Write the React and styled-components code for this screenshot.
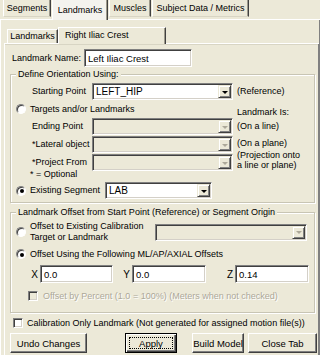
import React from 'react';
import styled, { createGlobalStyle } from 'styled-components';

const Global = createGlobalStyle`
  html, body { margin: 0; padding: 0; background: #ECE9D8; }
  body { font-family: "Liberation Sans", Arial, sans-serif; }
  * { box-sizing: border-box; }
`;

const Window = styled.div`
  width: 320px;
  height: 355px;
  overflow: hidden;
  background: #ECE9D8;
  display: flex;
  flex-direction: column;
  font-family: "Liberation Sans", Arial, sans-serif;
  font-size: 9px;
  line-height: 11px;
  color: #000;
`;

const TopStrip = styled.div`
  display: flex;
  align-items: flex-start;
  height: 20px;
  padding-left: 3px;
  border-bottom: 1px solid #fff;
`;

const TopTab = styled.div`
  width: ${p => p.$w}px;
  height: ${p => (p.$active ? 20 : 17)}px;
  margin-right: 1px;
  display: flex;
  align-items: center;
  justify-content: center;
  padding-top: ${p => (p.$active ? 0 : 1)}px;
  border-left: 1px solid #fff;
  border-right: 1px solid #404040;
  border-bottom: ${p => (p.$active ? 'none' : '1px solid #D8D5C4')};
  box-shadow: inset -1px 0 #9d9a8c;
  background: ${p => (p.$active ? '#F4F3EE' : '#ECE9D8')};
  position: relative;
  z-index: ${p => (p.$active ? 1 : 0)};
  white-space: nowrap;
`;

const OuterPanel = styled.div`
  flex: 1;
  display: flex;
  flex-direction: column;
  border-left: 1px solid #fff;
  border-right: 1px solid #808080;
  padding: 7px 0 0 3px;
`;

const InnerStrip = styled.div`
  display: flex;
  align-items: flex-end;
  height: 17px;
  padding-left: 3px;
  border-bottom: 1px solid #fff;
  box-shadow: 0 1px 0 #D8D5C4;
`;

const InnerTab = styled.div`
  width: ${p => p.$w}px;
  height: ${p => (p.$active ? 17 : 14)}px;
  margin-bottom: ${p => (p.$active ? -1 : 0)}px;
  display: flex;
  align-items: center;
  justify-content: ${p => (p.$left ? 'flex-start' : 'center')};
  padding-left: ${p => (p.$left ? 6 : 0)}px;
  padding-bottom: ${p => (p.$active ? 1 : 0)}px;
  border-top: 1px solid #fff;
  border-left: 1px solid #fff;
  border-right: 1px solid #404040;
  box-shadow: inset -1px 0 #9d9a8c;
  background: #ECE9D8;
  position: relative;
  z-index: ${p => (p.$active ? 1 : 0)};
  white-space: nowrap;
`;

const InnerPanel = styled.div`
  flex: 1;
  display: flex;
  flex-direction: column;
  border-left: 1px solid #fff;
  border-right: 1px solid #808080;
`;

const Row = styled.div`
  display: flex;
  align-items: center;
  height: ${p => p.$h}px;
  margin-top: ${p => p.$mt ?? 0}px;
  padding-left: ${p => p.$pl ?? 0}px;
  flex-shrink: 0;
`;

const Label = styled.span`
  display: inline-block;
  width: ${p => p.$w}px;
  padding-left: ${p => p.$pl ?? 0}px;
  white-space: nowrap;
  flex-shrink: 0;
`;

const AxisLabel = styled.span`
  width: ${p => p.$w}px;
  text-align: right;
  padding-right: 2px;
  flex-shrink: 0;
  font-size: 10px;
`;

const Field = styled.div`
  width: ${p => p.$w}px;
  height: 18px;
  flex-shrink: 0;
  display: flex;
  align-items: center;
  background: #fff;
  border: 1px solid;
  border-color: #808080 #fff #fff #808080;
  box-shadow: inset 1px 1px #404040, inset -1px -1px #D4D0C8;
  padding-left: 3px;
  white-space: nowrap;
  overflow: hidden;
  font-size: 9.5px;
`;

const SelectBox = styled.div`
  width: ${p => p.$w}px;
  height: 17px;
  flex-shrink: 0;
  display: flex;
  align-items: stretch;
  background: ${p => (p.$disabled ? '#ECE9D8' : '#fff')};
  border: 1px solid;
  border-color: #808080 #fff #fff #808080;
  box-shadow: inset 1px 1px #404040, inset -1px -1px #D4D0C8;
  padding: 1px;
`;

const SelectValue = styled.span`
  flex: 1;
  display: flex;
  align-items: center;
  padding-left: 2px;
  font-size: 10px;
  white-space: nowrap;
  overflow: hidden;
`;

const ArrowButton = styled.span`
  width: 13px;
  flex-shrink: 0;
  display: flex;
  align-items: center;
  justify-content: center;
  background: #ECE9D8;
  border: 1px solid;
  border-color: #ECE9D8 #404040 #404040 #ECE9D8;
  box-shadow: inset 1px 1px #fff, inset -1px -1px #808080;
`;

const Triangle = styled.span`
  width: 0;
  height: 0;
  border-left: 3px solid transparent;
  border-right: 3px solid transparent;
  border-top: 3px solid ${p => (p.$disabled ? '#ACA899' : '#000')};
  margin-top: 1px;
`;

const Note = styled.span`
  margin-left: ${p => p.$ml ?? 4}px;
  align-self: ${p => p.$align ?? 'center'};
  margin-top: ${p => p.$mt ?? 0}px;
  line-height: ${p => p.$lh ?? 11}px;
  white-space: nowrap;
`;

const Group = styled.fieldset`
  margin: ${p => p.$mt}px 3px 0 5px;
  padding: 0 0 ${p => p.$pb}px 0;
  border: 1px solid #C8C5B4;
  box-shadow: inset 1px 1px #fff, 1px 1px 0 #fff;
  min-width: 0;
  display: flex;
  flex-direction: column;
  flex-shrink: 0;
`;

const Legend = styled.legend`
  margin-left: 5px;
  padding: 0 2px;
  line-height: 11px;
  font-size: 9px;
  background: #ECE9D8;
`;

const Part = styled.div`
  width: ${p => p.$w}px;
  flex-shrink: 0;
  display: flex;
  align-items: center;
  padding-left: ${p => p.$pl ?? 0}px;
  align-self: stretch;
`;

const Radio = styled.span`
  width: 10px;
  height: 10px;
  flex-shrink: 0;
  border-radius: 50%;
  background: #fff;
  border: 1px solid;
  border-color: #808080 #fff #fff #808080;
  box-shadow: inset 1px 1px #404040;
  display: flex;
  align-items: center;
  justify-content: center;
`;

const Dot = styled.span`
  width: 4px;
  height: 4px;
  border-radius: 50%;
  background: #000;
  margin: 1px 0 0 1px;
`;

const RadioText = styled.span`
  margin-left: 4px;
  white-space: nowrap;
`;

const Check = styled.span`
  width: 10px;
  height: 10px;
  flex-shrink: 0;
  margin-left: ${p => p.$ml ?? 0}px;
  background: ${p => (p.$disabled ? '#ECE9D8' : '#fff')};
  border: 1px solid;
  border-color: #808080 #fff #fff #808080;
  box-shadow: inset 1px 1px #404040, inset -1px -1px #D4D0C8;
`;

const CheckText = styled.span`
  margin-left: ${p => p.$ml ?? 5}px;
  white-space: nowrap;
  color: ${p => (p.$disabled ? '#ACA899' : '#000')};
  text-shadow: ${p => (p.$disabled ? '1px 1px 0 #fff' : 'none')};
`;

const Button = styled.div`
  width: ${p => p.$w}px;
  height: 20px;
  margin-left: ${p => p.$ml}px;
  flex-shrink: 0;
  display: flex;
  align-items: stretch;
  justify-content: center;
  padding: ${p => (p.$default ? '3px' : '0')};
  background: #ECE9D8;
  border: 1px solid;
  border-color: ${p => (p.$default ? '#000' : '#fff #404040 #404040 #fff')};
  box-shadow: ${p =>
    p.$default
      ? 'inset 1px 1px #fff, inset -1px -1px #404040, inset -2px -2px #808080'
      : 'inset -1px -1px #808080'};
  font-size: 9.5px;
  white-space: nowrap;
`;

const ButtonText = styled.span`
  flex: 1;
  display: flex;
  align-items: center;
  justify-content: center;
  border: 1px ${p => (p.$focus ? 'dotted #000' : 'solid transparent')};
`;

function Select({ w, value, disabled }) {
  return (
    <SelectBox $w={w} $disabled={disabled}>
      <SelectValue>{value}</SelectValue>
      <ArrowButton>
        <Triangle $disabled={disabled} />
      </ArrowButton>
    </SelectBox>
  );
}

function RadioItem({ checked, children }) {
  return (
    <>
      <Radio>{checked && <Dot />}</Radio>
      <RadioText>{children}</RadioText>
    </>
  );
}

export default function App() {
  return (
    <Window>
      <Global />
      <TopStrip>
        <TopTab $w={48}>Segments</TopTab>
        <TopTab $w={56} $active>Landmarks</TopTab>
        <TopTab $w={42}>Muscles</TopTab>
        <TopTab $w={97}>Subject Data / Metrics</TopTab>
      </TopStrip>
      <OuterPanel>
        <InnerStrip>
          <InnerTab $w={51}>Landmarks</InnerTab>
          <InnerTab $w={108} $active $left>Right Iliac Crest</InnerTab>
        </InnerStrip>
        <InnerPanel>
          <Row $h={18} $mt={5}>
            <Label $w={79} $pl={7}>Landmark Name:</Label>
            <Field $w={108}>Left Iliac Crest</Field>
          </Row>

          <Group $mt={2} $pb={3}>
            <Legend>Define Orientation Using:</Legend>
            <Row $h={17} $mt={3}>
              <Label $w={81} $pl={21}>Starting Point</Label>
              <Select w={141} value="LEFT_HIP" />
              <Note>(Reference)</Note>
            </Row>
            <Row $h={18}>
              <Part $w={226} $pl={5}>
                <RadioItem>Targets and/or Landmarks</RadioItem>
              </Part>
              <Note $align="flex-end" $ml={0}>Landmark Is:</Note>
            </Row>
            <Row $h={17}>
              <Label $w={81} $pl={21}>Ending Point</Label>
              <Select w={141} disabled />
              <Note>(On a line)</Note>
            </Row>
            <Row $h={17} $mt={1}>
              <Label $w={81} $pl={21}>*Lateral object</Label>
              <Select w={141} disabled />
              <Note $mt={-2}>(On a plane)</Note>
            </Row>
            <Row $h={17} $mt={1}>
              <Label $w={81} $pl={21}>*Project From</Label>
              <Select w={141} disabled />
              <Note $align="flex-start" $mt={-4} $lh={10}>
                (Projection onto
                <br />
                a line or plane)
              </Note>
            </Row>
            <Row $h={11} $mt={-2} $pl={19}>
              * = Optional
            </Row>
            <Row $h={17} $mt={2}>
              <Part $w={94} $pl={5}>
                <RadioItem checked>Existing Segment</RadioItem>
              </Part>
              <Select w={107} value="LAB" />
            </Row>
          </Group>

          <Group $mt={4} $pb={10}>
            <Legend>Landmark Offset from Start Point (Reference) or Segment Origin</Legend>
            <Row $h={22} $mt={3}>
              <Part $w={144} $pl={5}>
                <RadioItem>
                  Offset to Existing Calibration
                  <br />
                  Target or Landmark
                </RadioItem>
              </Part>
              <Select w={152} disabled />
            </Row>
            <Row $h={12} $mt={5} $pl={5}>
              <RadioItem checked>Offset Using the Following ML/AP/AXIAL Offsets</RadioItem>
            </Row>
            <Row $h={18} $mt={5}>
              <AxisLabel $w={29}>X</AxisLabel>
              <Field $w={73}>0.0</Field>
              <AxisLabel $w={19}>Y</AxisLabel>
              <Field $w={74}>0.0</Field>
              <AxisLabel $w={29}>Z</AxisLabel>
              <Field $w={74}>0.14</Field>
            </Row>
            <Row $h={12} $mt={7}>
              <Check $ml={17} $disabled />
              <CheckText $disabled>Offset by Percent (1.0 = 100%) (Meters when not checked)</CheckText>
            </Row>
          </Group>

          <Row $h={12} $mt={4} $pl={8}>
            <Check />
            <CheckText $ml={4}>Calibration Only Landmark (Not generated for assigned motion file(s))</CheckText>
          </Row>
          <Row $h={20} $mt={4}>
            <Button $w={77} $ml={5}><ButtonText>Undo Changes</ButtonText></Button>
            <Button $w={52} $ml={38} $default>
              <ButtonText $focus>Apply</ButtonText>
            </Button>
            <Button $w={52} $ml={15}><ButtonText>Build Model</ButtonText></Button>
            <Button $w={69} $ml={4}><ButtonText>Close Tab</ButtonText></Button>
          </Row>
        </InnerPanel>
      </OuterPanel>
    </Window>
  );
}
